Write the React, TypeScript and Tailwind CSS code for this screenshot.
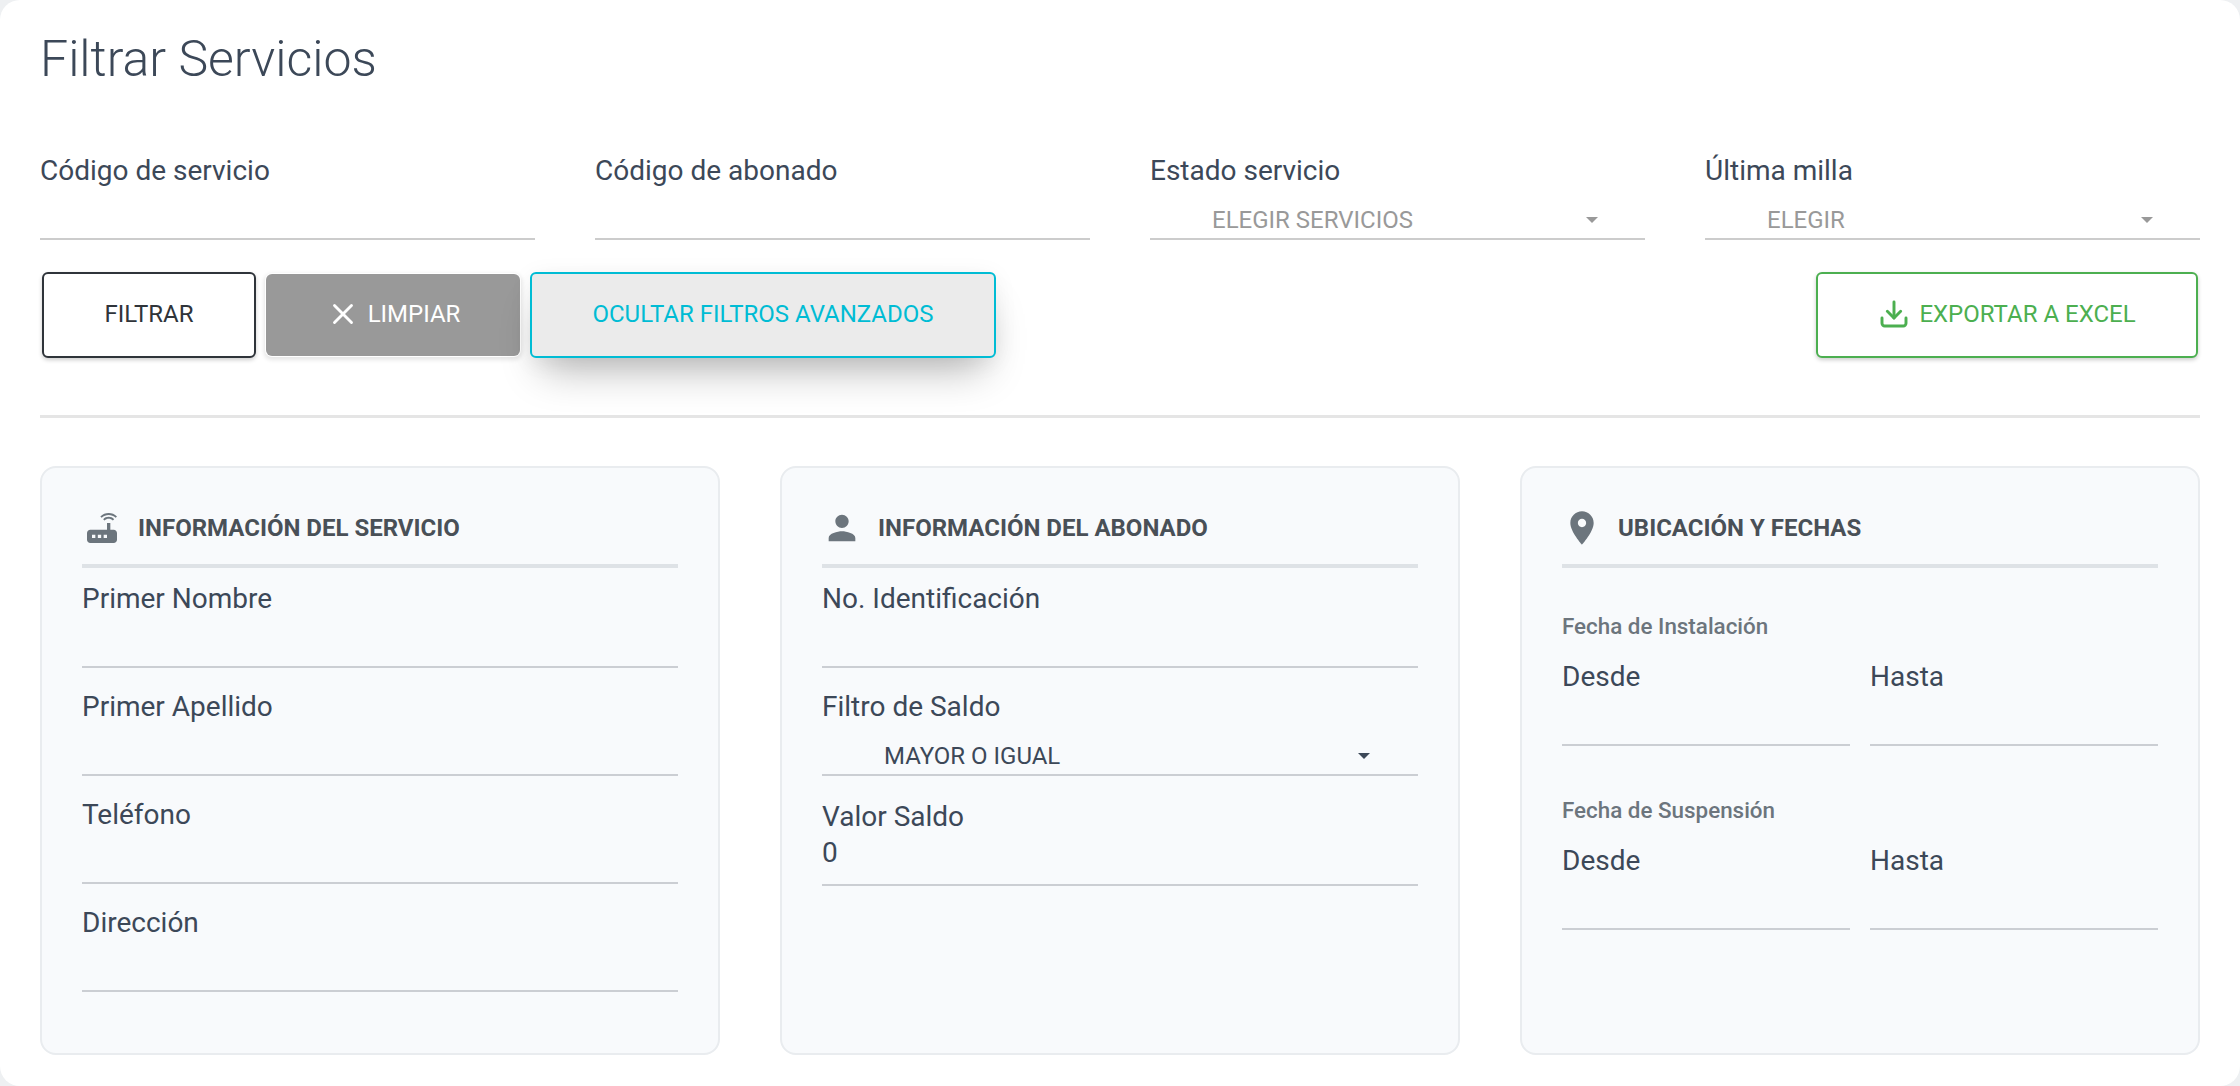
import { Download, X } from "lucide-react";

const font = "[font-family:Roboto,'Liberation_Sans',sans-serif]";

// Form field label
function Label({ text }: { text: string }) {
  return <div className="h-[36px] text-[28px] leading-[38px] text-[#3c4858]">{text}</div>;
}

function Field({ label, className = "" }: { label: string; className?: string }) {
  return (
    <div className={className}>
      <Label text={label} />
      <input className="block w-full h-[52px] border-b-2 border-[#cbced3] bg-transparent outline-none" />
    </div>
  );
}

function Caret({ color }: { color: string }) {
  return (
    <svg width="12" height="6" viewBox="0 0 12 6" className="shrink-0">
      <path d="M0 0h12L6 6z" fill={color} />
    </svg>
  );
}

function TopField({ label }: { label: string }) {
  return (
    <div>
      <Label text={label} />
      <input className="block w-full h-[52px] border-b-2 border-[#cccccc] bg-transparent outline-none" />
    </div>
  );
}

function TopSelect({ label, value }: { label: string; value: string }) {
  return (
    <div>
      <Label text={label} />
      <div className="flex items-center justify-between h-[52px] border-b-2 border-[#cccccc] pt-[14px] pl-[62px] pr-[47px]">
        <span className="text-[24px] text-[#999999]">{value}</span>
        <Caret color="#999999" />
      </div>
    </div>
  );
}

function CardHeading({ icon, title }: { icon: React.ReactNode; title: string }) {
  return (
    <div>
      <div className="flex items-center h-[48px] mb-[12px]">
        <div className="flex justify-center w-[40px] mr-[16px]">{icon}</div>
        <h3 className="text-[24px] font-bold text-[#495057]">{title}</h3>
      </div>
      <div className="h-[4px] bg-[#dee2e6]" />
    </div>
  );
}

function Icon({ d }: { d: string }) {
  return (
    <svg width="40" height="40" viewBox="0 0 24 24" fill="#6c757d" className="shrink-0">
      <path d={d} />
    </svg>
  );
}

function Card({ children }: { children: React.ReactNode }) {
  return (
    <div className="h-[589px] rounded-[16px] border-2 border-[#e9ecef] bg-[#f8fafc] px-[40px] pt-[36px]">
      {children}
    </div>
  );
}

function DateGroup({ title }: { title: string }) {
  return (
    <div>
      <div className="h-[28px] text-[22.4px] leading-[29px] font-medium text-[#6c757d]">{title}</div>
      <div className="grid grid-cols-2 gap-[20px] mt-[18px]">
        <Field label="Desde" />
        <Field label="Hasta" />
      </div>
    </div>
  );
}

export default function App() {
  return (
    <div className={`h-[1086px] overflow-hidden bg-[#eef0f2] ${font}`}>
      <div className="h-full rounded-[20px] bg-white px-[40px] pt-[24px]">
        <h1 className="h-[68px] text-[50px] leading-[70px] font-light text-[#3c4858]">Filtrar Servicios</h1>

        <div className="grid grid-cols-4 gap-[60px] mt-[60px]">
          <TopField label="Código de servicio" />
          <TopField label="Código de abonado" />
          <TopSelect label="Estado servicio" value="ELEGIR SERVICIOS" />
          <TopSelect label="Última milla" value="ELEGIR" />
        </div>

        <div className="flex items-center justify-between mt-[32px] px-[2px] text-[24px]">
          <div className="flex items-center gap-[8px]">
            <button className="w-[214px] h-[86px] pb-[2px] rounded-[6px] border-2 border-[#2f343a] bg-white text-[#2f343a] shadow-[0_2px_4px_rgba(0,0,0,0.2)]">
              FILTRAR
            </button>
            <button className="flex items-center justify-center gap-[8px] w-[258px] h-[86px] pb-[2px] rounded-[8px] border-2 border-transparent bg-[#999999] bg-clip-padding text-white shadow-[0_2px_4px_rgba(0,0,0,0.1)]">
              <X size={34} strokeWidth={2} />
              LIMPIAR
            </button>
            <button className="w-[466px] h-[86px] pb-[2px] rounded-[6px] border-2 border-[#00bcd4] bg-[#ebebeb] text-[#00bcd4] shadow-[0_24px_40px_-12px_rgba(0,0,0,0.28),0_4px_24px_0_rgba(0,0,0,0.06)]">
              OCULTAR FILTROS AVANZADOS
            </button>
          </div>
          <button className="flex items-center justify-center gap-[9px] w-[382px] h-[86px] pb-[2px] rounded-[6px] border-2 border-[#4caf50] bg-white text-[#4caf50] shadow-[0_2px_4px_rgba(0,0,0,0.2)]">
            <Download size={32} strokeWidth={2.2} />
            EXPORTAR A EXCEL
          </button>
        </div>

        <div className="h-[3px] bg-[#e5e5e5] mt-[57px]" />

        <div className="grid grid-cols-3 gap-[60px] mt-[48px]">
          <Card>
            <CardHeading
              title="INFORMACIÓN DEL SERVICIO"
              icon={<Icon d="M20.2 5.9l.8-.8C19.6 3.7 17.8 3 16 3s-3.6.7-5 2.1l.8.8C13 4.8 14.5 4.2 16 4.2s3 .6 4.2 1.7zm-.9.8c-.9-.9-2.1-1.4-3.3-1.4s-2.4.5-3.3 1.4l.8.8c.7-.7 1.6-1 2.5-1 .9 0 1.8.3 2.5 1l.8-.8zM19 13h-2V9h-2v4H5c-1.1 0-2 .9-2 2v4c0 1.1.9 2 2 2h14c1.1 0 2-.9 2-2v-4c0-1.1-.9-2-2-2zM8 18H6v-2h2v2zm3.5 0h-2v-2h2v2zm3.5 0h-2v-2h2v2z" />}
            />
            <div className="flex flex-col gap-[20px] mt-[12px]">
              <Field label="Primer Nombre" />
              <Field label="Primer Apellido" />
              <Field label="Teléfono" />
              <Field label="Dirección" />
            </div>
          </Card>

          <Card>
            <CardHeading
              title="INFORMACIÓN DEL ABONADO"
              icon={<Icon d="M12 12c2.21 0 4-1.79 4-4s-1.79-4-4-4-4 1.79-4 4 1.79 4 4 4zm0 2c-2.67 0-8 1.34-8 4v2h16v-2c0-2.66-5.33-4-8-4z" />}
            />
            <div className="mt-[12px]">
              <Field label="No. Identificación" />
              <div className="mt-[20px]">
                <Label text="Filtro de Saldo" />
                <div className="flex items-center justify-between h-[52px] border-b-2 border-[#cbced3] pt-[14px] pl-[62px] pr-[48px]">
                  <span className="text-[24px] text-[#3c4858]">MAYOR O IGUAL</span>
                  <Caret color="#3c4858" />
                </div>
              </div>
              <div className="mt-[22px]">
                <Label text="Valor Saldo" />
                <input
                  defaultValue="0"
                  className="block w-full h-[52px] pb-[14px] border-b-2 border-[#cbced3] bg-transparent text-[28px] text-[#3c4858] outline-none"
                />
              </div>
            </div>
          </Card>

          <Card>
            <CardHeading
              title="UBICACIÓN Y FECHAS"
              icon={<Icon d="M12 2C8.13 2 5 5.13 5 9c0 5.25 7 13 7 13s7-7.75 7-13c0-3.87-3.13-7-7-7zm0 9.5c-1.38 0-2.5-1.12-2.5-2.5s1.12-2.5 2.5-2.5 2.5 1.12 2.5 2.5-1.12 2.5-2.5 2.5z" />}
            />
            <div className="flex flex-col gap-[50px] mt-[44px]">
              <DateGroup title="Fecha de Instalación" />
              <DateGroup title="Fecha de Suspensión" />
            </div>
          </Card>
        </div>
      </div>
    </div>
  );
}
